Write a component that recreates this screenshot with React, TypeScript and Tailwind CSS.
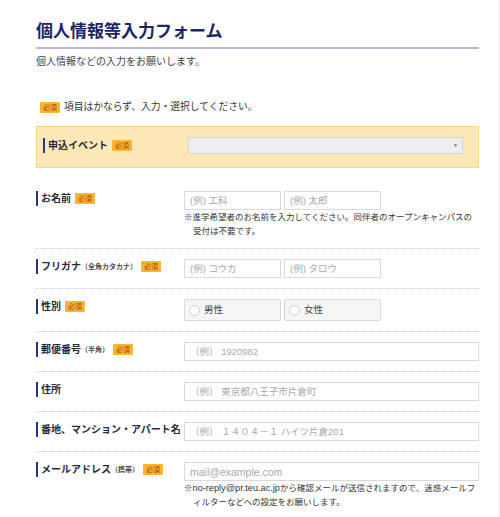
const font = "font-['Liberation_Sans','Noto_Sans_CJK_JP',sans-serif]";

function Badge({ className = "" }: { className?: string }) {
  return (
    <span
      className={`inline-flex h-[11px] shrink-0 items-center rounded-[1px] bg-[#fab530] px-[3px] font-['Noto_Sans_CJK_JP',sans-serif] text-[7px] leading-none text-[#ad3d17] ${className}`}
    >
      必須
    </span>
  );
}

interface LabelProps {
  title: string;
  sub?: string;
  required?: boolean;
}

function Label({ title, sub, required }: LabelProps) {
  return (
    <div className="flex w-[148px] shrink-0 items-center">
      <div className="flex h-[15px] items-center whitespace-nowrap border-l-2 border-[#26368c] pl-[3px] text-[10px] font-bold leading-none text-[#262a3a]">
        {title}
        {sub && <span className="text-[7px] font-bold text-[#4a4a4a]">{sub}</span>}
      </div>
      {required && <Badge className="ml-[4px]" />}
    </div>
  );
}

function TextInput({ placeholder, wide, latin }: { placeholder: string; wide?: boolean; latin?: boolean }) {
  return (
    <input
      placeholder={placeholder}
      className={`${wide ? "w-[295px]" : "w-[97px]"} ${latin ? "text-[10.5px]" : "text-[9.5px]"} block h-[19px] border border-[#dadada] bg-white px-[5px] text-[#333] outline-none placeholder:text-[#a9a9a9]`}
    />
  );
}

function Radio({ label }: { label: string }) {
  return (
    <label className="flex h-[22px] w-[97px] items-center gap-[4px] rounded-[2px] border border-[#d9d9d9] bg-[#f6f6f6] pl-[4px] text-[9.5px] text-[#444]">
      <span className="h-[11px] w-[11px] rounded-full border border-[#cfcfcf] bg-white" />
      {label}
    </label>
  );
}

function Row({ children, last }: { children: React.ReactNode; last?: boolean }) {
  return (
    <div className={`flex items-start py-[10px] ${last ? "" : "border-b border-dotted border-[#c6c6da]"}`}>
      {children}
    </div>
  );
}

function Note({ lines }: { lines: React.ReactNode[] }) {
  return (
    <p className="whitespace-nowrap text-[8.5px] leading-[14px] text-[#333]">
      {lines.map((l, i) => (
        <span key={i} className={`block ${i > 0 ? "pl-[9px]" : ""}`}>
          {l}
        </span>
      ))}
    </p>
  );
}

export default function App() {
  return (
    <div className={`min-h-[517px] w-[500px] border-r-2 border-[#f1f1f1] bg-white ${font}`}>
      <div className="pl-[36px] pr-[19px] pt-[20px]">
        <h1 className="border-b-2 border-[#b9b9d1] pb-[3px] text-[17px] font-bold leading-[24px] text-[#1d2563]">
          個人情報等入力フォーム
        </h1>
        <p className="mt-[6px] text-[10px] leading-[14px] text-[#444]">個人情報などの入力をお願いします。</p>

        <div className="mt-[31px] flex items-center gap-[4px] pl-[4px] text-[9.75px] leading-[14px] text-[#333]">
          <Badge />
          項目はかならず、入力・選択してください。
        </div>

        {/* event select */}
        <div className="mt-[12px] flex items-center border border-[#f8d58c] bg-[#fee8b8] pb-[13px] pl-[6px] pr-[15px] pt-[10px]">
          <div className="flex w-[145px] shrink-0 items-center">
            <div className="flex h-[15px] items-center border-l-2 border-[#26368c] pl-[3px] text-[10px] font-bold leading-none text-[#262a3a]">
              申込イベント
            </div>
            <Badge className="ml-[4px]" />
          </div>
          <div className="relative h-[17px] flex-1">
            <select className="block h-full w-full appearance-none border border-[#d6d6d6] bg-[#eeeeee] text-[9px] outline-none" />
            <span className="absolute right-[5px] top-[6px] text-[5px] leading-none text-[#777]">▼</span>
          </div>
        </div>

        <div className="mt-[13px]">
          <Row>
            <Label title="お名前" required />
            <div>
              <div className="flex gap-[3px]">
                <TextInput placeholder="(例) 工科" />
                <TextInput placeholder="(例) 太郎" />
              </div>
              <Note lines={["※進学希望者のお名前を入力してください。同伴者のオープンキャンパスの", "受付は不要です。"]} />
            </div>
          </Row>
          <Row>
            <Label title="フリガナ" sub="（全角カタカナ）" required />
            <div className="flex gap-[3px]">
              <TextInput placeholder="(例) コウカ" />
              <TextInput placeholder="(例) タロウ" />
            </div>
          </Row>
          <Row>
            <Label title="性別" required />
            <div className="flex gap-[3px]">
              <Radio label="男性" />
              <Radio label="女性" />
            </div>
          </Row>
          <Row>
            <Label title="郵便番号" sub="（半角）" required />
            <TextInput wide placeholder="（例） 1920982" />
          </Row>
          <Row>
            <Label title="住所" />
            <TextInput wide placeholder="（例） 東京都八王子市片倉町" />
          </Row>
          <Row>
            <Label title="番地、マンション・アパート名" />
            <TextInput wide placeholder="（例） １４０４－１ ハイツ片倉201" />
          </Row>
          <Row last>
            <Label title="メールアドレス" sub="（携帯）" required />
            <div>
              <TextInput wide latin placeholder="mail@example.com" />
              <Note
                lines={[
                  <>
                    ※<span className="text-[9.2px]">no-reply@pr.teu.ac.jp</span>から確認メールが送信されますので、迷惑メールフ
                  </>,
                  "ィルターなどへの設定をお願いします。",
                ]}
              />
            </div>
          </Row>
        </div>
      </div>
    </div>
  );
}
